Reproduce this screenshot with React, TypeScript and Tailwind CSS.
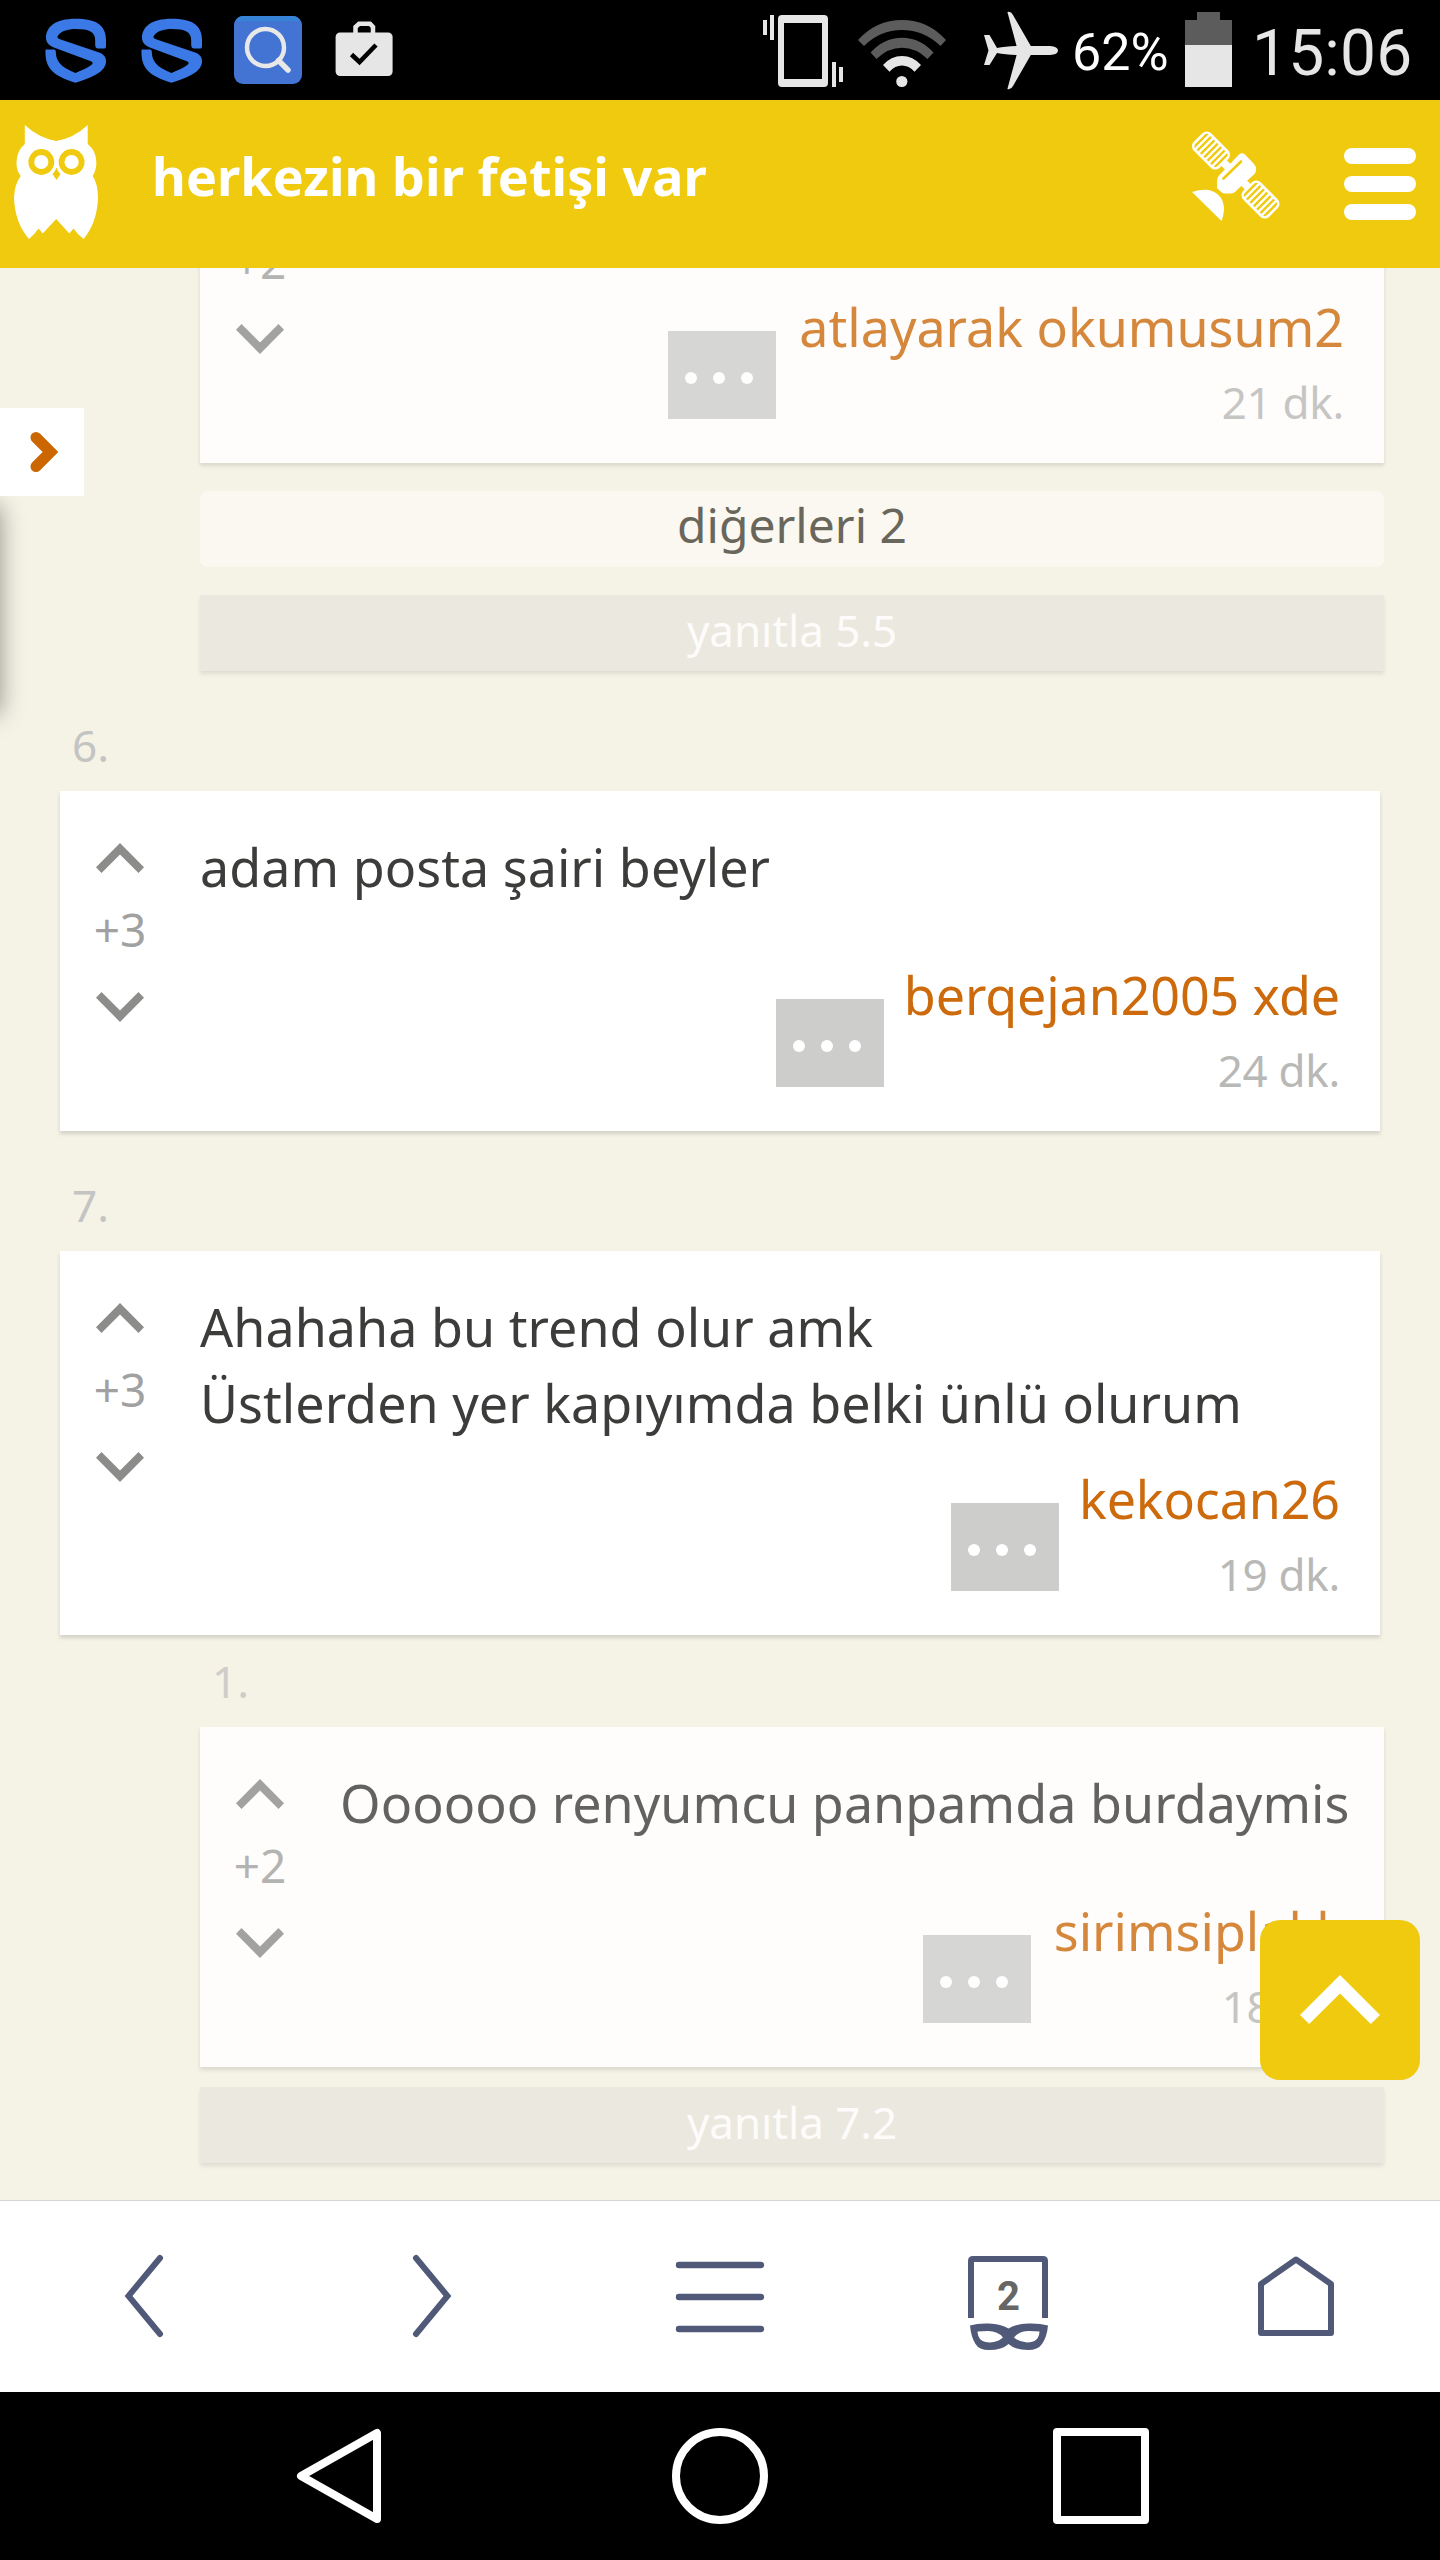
import React from 'react';

type Entry = {
  score: string;
  lines: string[];
  author: string;
  time: string;
};

const CLIPPED_REPLY: Entry = { score: '+2', lines: [''], author: 'atlayarak okumusum2', time: '21 dk.' };
const POST_6: Entry = { score: '+3', lines: ['adam posta şairi beyler'], author: 'berqejan2005 xde', time: '24 dk.' };
const POST_7: Entry = {
  score: '+3',
  lines: ['Ahahaha bu trend olur amk', 'Üstlerden yer kapıyımda belki ünlü olurum'],
  author: 'kekocan26',
  time: '19 dk.',
};
const REPLY_7_1: Entry = {
  score: '+2',
  lines: ['Oooooo renyumcu panpamda burdaymis'],
  author: 'sirimsiplakk',
  time: '18 dk.',
};

const ShieldS = ({ className = '' }: { className?: string }) => (
  <svg className={className} width="62" height="65" viewBox="45 18 63 65" preserveAspectRatio="none">
    <path
      fill="#3b7ae6"
      d="M107 46V40C107 25 97 18.700 76 18.700C55 18.700 46 27 46 38C46 43 50 45.500 54 47.500L91 61C94 62 94 63.500 92 65C88 68.500 82 70 76 73C70 70 56 66 56 52C56 50 55 49.500 53 49.500H45.500C45 66 50 75 76 82.700C98 76 107 70 107 61C107 56.500 104 54 100 52.500L61 39.500C58 38.500 57 37.500 58 36C61 31 68 29 76 29C90 29 96 32 96 40V45C96 47 97 48.500 99 48.500H105C106 48.500 107 48 107 46Z"
    />
  </svg>
);

const StatusBar = () => (
  <div className="flex h-[100px] shrink-0 bg-black">
    <ShieldS className="mt-[18px] ml-[45px]" />
    <ShieldS className="mt-[18px] ml-[34px]" />
    <svg className="mt-4 ml-[31px]" width="68" height="68" viewBox="234 16 68 68">
      <rect x="234" y="16" width="68" height="68" rx="9" fill="#4373d3" />
      <path d="M236 21Q238 16 243 16H293Q298 16 300 21Z" fill="#3683d8" />
      <ellipse cx="265.500" cy="47.500" rx="18.500" ry="18.500" fill="none" stroke="#e8e8e8" strokeWidth="4.500" />
      <path d="M278.500 60.500L288 70" stroke="#e8e8e8" strokeWidth="5.500" strokeLinecap="round" />
    </svg>
    <svg className="mt-[21px] ml-[33px]" width="58" height="56" viewBox="335 21 58 56">
      <path d="M355.500 34V27L359 23.800H370L373 27V34" fill="none" stroke="#e6e6e6" strokeWidth="4.500" />
      <rect x="335.600" y="32.500" width="57" height="43.500" rx="4.500" fill="#e6e6e6" />
      <path d="M351.500 54.500L359.500 62L376 45" fill="none" stroke="#000" strokeWidth="4.600" />
    </svg>

    {/* ringer, network, power */}
    <svg className="mt-3 ml-[369px]" width="82" height="78" viewBox="762 12 82 78">
      <g fill="#e6e6e6">
        <path fillRule="evenodd" d="M782 15H824Q828 15 828 19V83Q828 87 824 87H782Q778 87 778 83V19Q778 15 782 15ZM784 23V79H822V23Z" />
        <path d="M763 20H767V35H763ZM770 15H774V40H770ZM832 62H836V87H832ZM839 67H843V82H839Z" />
      </g>
    </svg>
    <svg className="mt-4 ml-[13px]" width="90" height="74" viewBox="857 16 90 74">
      <g fill="#5c5c5c">
        <path d="M858 40Q876 20 902 20Q928 20 946 40L940.500 46Q924 30 902 30Q880 30 864 46Z" />
        <path d="M870.600 52.500Q884 37.700 902 37.700Q920 37.700 933.500 52.500L927.500 59Q916 47.700 902 47.700Q888 47.700 876.500 59Z" />
      </g>
      <path fill="#e6e6e6" d="M883 65Q891 56 902 56Q913 56 921 65L914.500 71.800Q909 65.500 902 65.500Q895 65.500 889.500 71.800Z" />
      <circle cx="901.800" cy="81.500" r="5.600" fill="#e6e6e6" />
    </svg>
    <svg className="mt-[11px] ml-9" width="76" height="80" viewBox="983 11 76 80">
      <path
        fill="#e6e6e6"
        d="M1007.400 12Q1011 11 1013 15L1030.800 46H1050Q1058 46.500 1058 50.500Q1058 54.500 1050 55H1030.800L1013 86Q1011 90 1007.400 89L1016.600 55Q1005 54.500 997 53L989.500 65H984L988.500 50.500L984 35H989.500L997 48Q1005 46.500 1016.600 46Z"
      />
    </svg>
    <span className="ml-[13px] w-[98px] whitespace-nowrap font-[Roboto] text-[52px] leading-[105px] text-white">62%</span>
    <svg className="mt-3 ml-[15px] shrink-0" width="47" height="75" viewBox="1185 12 47 75">
      <path d="M1197 12H1220V20H1232V45H1185V20H1197Z" fill="#5c5c5c" />
      <path d="M1185 45H1232V87H1185Z" fill="#e6e6e6" />
    </svg>
    <span className="ml-5 whitespace-nowrap font-[Roboto] text-[64px] leading-[107px] tracking-[0.2px] text-[#e6e6e6]">15:06</span>
  </div>
);

const Owl = () => (
  <svg className="mt-6 ml-[13px] shrink-0" width="86" height="116" viewBox="13 124 86 116">
    <path
      fill="#fff"
      d="M24.800 125Q39 138 56.200 141Q74 138 87.700 125V144Q96.500 151 96.400 163Q96 171 92.700 176Q98 184 98 198Q97 223 83.600 239Q77 234 73.500 228.600L69.300 233.500L56.200 219L42.700 233.500L38.600 228.600Q35 234 29 239Q15 223 14 198Q14.500 184 20.700 176Q16.500 171 16.500 163Q16.500 151 24.800 144Z"
    />
    <circle cx="41.300" cy="162" r="10" fill="#fff" stroke="#f0ca0f" strokeWidth="5.800" />
    <circle cx="71.600" cy="162" r="10" fill="#fff" stroke="#f0ca0f" strokeWidth="5.800" />
    <path d="M56.500 167.500Q58 172 60.500 174L56.500 180L52.500 174Q55 172 56.500 167.500Z" fill="#f0ca0f" />
  </svg>
);

const SolarPanel = ({ transform }: { transform: string }) => (
  <g transform={transform} fill="none" stroke="#fff">
    <rect x="-17" y="-11" width="34" height="22" rx="5" strokeWidth="2.600" />
    <path d="M-12 -10V10M-7.200 -11V11M-2.400 -11V11M2.400 -11V11M7.200 -11V11M12 -10V10" strokeWidth="2.400" />
  </g>
);

const Satellite = () => (
  <svg className="mt-[30px] shrink-0" width="90" height="92" viewBox="1191 130 90 92">
    <SolarPanel transform="translate(1211 150.500) rotate(45)" />
    <SolarPanel transform="translate(1260.500 199.500) rotate(45)" />
    <path d="M1223 162L1249 188" stroke="#fff" strokeWidth="8" />
    <path
      fill="#fff"
      d="M1239 154.500Q1242 152 1245 154.500L1254 164Q1258 169 1254.500 174L1238 189L1235 192Q1233 193.500 1230 193.500H1225Q1222 193.500 1217 188V181Q1217 178 1219 175.500Z"
    />
    <path d="M1223.500 178.500L1241 161.500" stroke="#f0ca0f" strokeWidth="2.600" strokeLinecap="round" />
    <path d="M1192 192Q1201 189 1209 190Q1224 194 1224 210Q1223.500 216 1221.500 221Z" fill="#fff" />
  </svg>
);

const Header = () => (
  <header className="flex h-[168px] shrink-0 bg-[#f0ca0f]">
    <Owl />
    <h1 className="ml-[53px] flex-1 whitespace-nowrap text-[52px] leading-[152px] font-bold tracking-[0.08px] text-white">
      herkezin bir fetişi var
    </h1>
    <Satellite />
    <div className="mt-12 mr-6 ml-[63px] flex w-[72px] flex-col gap-3">
      <span className="h-4 rounded-lg bg-white" />
      <span className="h-4 rounded-lg bg-white" />
      <span className="h-4 rounded-lg bg-white" />
    </div>
  </header>
);

const Chevron = ({ down = false, className = '' }: { down?: boolean; className?: string }) => (
  <svg className={className} width="48" height="30" viewBox="0 0 48 30">
    <path d={down ? 'M0 5.800L5.500 0L24 18.500L42.500 0L48 5.800L24 30Z' : 'M0 24.200L5.500 30L24 11.500L42.500 30L48 24.200L24 0Z'} fill="#8c8c8b" />
  </svg>
);

const EntryCard = ({ entry, reply = false }: { entry: Entry; reply?: boolean }) => (
  <article
    className={
      reply
        ? 'ml-[200px] w-[1184px] bg-white/85 shadow-[0_3px_4px_rgba(0,0,0,0.11)]'
        : 'ml-[60px] w-[1320px] bg-white shadow-[0_3px_4px_rgba(0,0,0,0.14)]'
    }
  >
    <div className={reply ? 'flex min-h-[340px] opacity-80' : 'flex min-h-[340px]'}>
      <div className="flex w-[120px] shrink-0 flex-col items-center">
        <Chevron className="mt-[52px]" />
        <span className="text-[46px] leading-[112px] text-[#a1a1a1]">{entry.score}</span>
        <Chevron down className="mt-[7px]" />
      </div>
      <div className="flex min-w-0 flex-1 flex-col pt-[38px] pr-10 pb-[22px] pl-5">
        {entry.lines.map((line, i) => (
          <p key={i} className="min-h-[76px] text-[52px] leading-[76px] tracking-[0.04px] whitespace-nowrap text-[#3c3c3b]">
            {line}
          </p>
        ))}
        <div className={reply ? 'mt-auto flex items-end justify-end gap-[23px] pt-[22px]' : 'mt-auto flex items-end justify-end gap-5 pt-[22px]'}>
          <div className="mb-[22px] flex h-[88px] w-[108px] gap-4 bg-[#cdcdcc] pt-[41px] pl-[17px]">
            <span className="size-3 rounded-full bg-white" />
            <span className="size-3 rounded-full bg-white" />
            <span className="size-3 rounded-full bg-white" />
          </div>
          <div className="flex flex-col text-right whitespace-nowrap">
            <span className={reply ? 'text-[52px] leading-[72px] text-[#cc6a0c]' : 'text-[52px] leading-[72px] tracking-[-0.12px] text-[#cc6a0c]'}>
              {entry.author}
            </span>
            <span className="text-[44px] leading-[78px] tracking-[-0.3px] text-[#b8b8b7]">{entry.time}</span>
          </div>
        </div>
      </div>
    </div>
  </article>
);

const ReplyButton = ({ label, className }: { label: string; className: string }) => (
  <div
    className={`ml-[200px] h-[76px] w-[1184px] bg-[#ebe8e0] text-center text-[44px] leading-[71px] tracking-[-0.1px] text-[#fdfcfa] shadow-[0_3px_4px_rgba(0,0,0,0.09)] ${className}`}
  >
    {label}
  </div>
);

const Feed = () => (
  <main className="relative h-[1932px] shrink-0 overflow-hidden bg-[#f5f2e6]">
    <div className="-mt-[145px] flex flex-col">
      <EntryCard entry={CLIPPED_REPLY} reply />
      <div className="mt-7 ml-[200px] h-[76px] w-[1184px] rounded-lg bg-[#fbf8f1] text-center text-[48px] leading-[67px] text-[#69665b]">
        diğerleri 2
      </div>
      <ReplyButton label="yanıtla 5.5" className="mt-7" />

      <span className="mt-[29px] ml-[72px] text-[44px] leading-[91px] text-[#c4c4c3]">6.</span>
      <EntryCard entry={POST_6} />

      <span className="mt-[29px] ml-[72px] text-[44px] leading-[91px] text-[#c4c4c3]">7.</span>
      <EntryCard entry={POST_7} />

      <span className="mt-px ml-[212px] text-[44px] leading-[91px] text-[#cecdc9]">1.</span>
      <EntryCard entry={REPLY_7_1} reply />
      <ReplyButton label="yanıtla 7.2" className="mt-5" />
    </div>

    {/* collapsed side drawer and its handle */}
    <div className="absolute top-[238px] -left-10 h-[208px] w-10 shadow-[0_0_24px_rgba(0,0,0,0.4)]" />
    <div className="absolute top-[140px] left-0 h-[88px] w-[84px] bg-white">
      <svg width="84" height="88" viewBox="0 408 84 88">
        <path d="M36 437.500L50.500 452L36 466.500" fill="none" stroke="#cc6600" strokeWidth="11" strokeLinecap="round" />
      </svg>
    </div>

    {/* back to top */}
    <div className="absolute top-[1652px] right-5 flex h-40 w-40 justify-center rounded-[20px] bg-[#f0ca0f] pt-[55px]">
      <svg width="80" height="49" viewBox="0 0 80 49">
        <path d="M0 40L9.200 49L40 18.500L70.800 49L80 40L40 0Z" fill="#fff" />
      </svg>
    </div>
  </main>
);

const BrowserBar = () => (
  <div className="grid h-[192px] shrink-0 grid-cols-5 border-t border-[#d4d4d6] bg-white pt-[49px]">
    <svg className="mx-auto" width="96" height="104" viewBox="96 2250 96 104" fill="none" stroke="#505a78" strokeWidth="6" strokeLinecap="round">
      <path d="M160 2258L128.500 2296L160 2334" />
    </svg>
    <svg className="mx-auto" width="96" height="104" viewBox="384 2250 96 104" fill="none" stroke="#505a78" strokeWidth="6" strokeLinecap="round">
      <path d="M416 2258L447.500 2296L416 2334" />
    </svg>
    <svg className="mx-auto" width="96" height="104" viewBox="672 2250 96 104" fill="none" stroke="#505a78" strokeWidth="6.400" strokeLinecap="round">
      <path d="M679 2265H761M679 2297H761M679 2329H761" />
    </svg>
    <div className="relative mx-auto">
      <svg width="96" height="104" viewBox="960 2250 96 104">
        <path d="M971 2318V2261Q971 2259 973 2259H1043Q1045 2259 1045 2261V2318" fill="none" stroke="#505a78" strokeWidth="6" />
        <path
          fillRule="evenodd"
          fill="#505a78"
          d="M970 2325.500Q978 2323 989 2323.500Q1001 2324 1008.500 2328.500Q1016 2324 1028 2323.500Q1039 2323 1048 2325.500Q1047 2337 1042 2344Q1038 2350 1028 2350Q1015 2350 1008.500 2344Q1002 2350 989 2350Q979 2350 975.500 2344Q971 2337 970 2325.500ZM977.500 2331.500Q978 2342.500 990 2342.500Q998 2342 1003 2337.500Q998 2331 988 2331Q982 2331 977.500 2331.500ZM1039.500 2331.500Q1039 2342.500 1027 2342.500Q1019 2342 1014 2337.500Q1019 2331 1029 2331Q1035 2331 1039.500 2331.500Z"
        />
      </svg>
      <span className="absolute inset-x-0 top-[23px] pl-px text-center font-[Roboto] text-[40px] leading-[48px] font-bold text-[#666]">2</span>
    </div>
    <svg className="mx-auto" width="96" height="104" viewBox="1248 2250 96 104" fill="none" stroke="#505a78" strokeWidth="6" strokeLinejoin="round">
      <path d="M1261 2284L1296 2259.500L1331 2284V2333H1261Z" />
    </svg>
  </div>
);

const NavBar = () => (
  <div className="flex h-[168px] shrink-0 bg-black pt-9">
    <svg className="ml-[296px]" width="86" height="96" viewBox="0 0 86 96" fill="none" stroke="#fff" strokeWidth="8" strokeLinejoin="round">
      <path d="M81 5V91L5 48Z" />
    </svg>
    <svg className="ml-[290px]" width="96" height="96" viewBox="0 0 96 96">
      <circle cx="48" cy="48" r="44" fill="none" stroke="#fff" strokeWidth="8" />
    </svg>
    <div className="ml-[285px] h-24 w-24 rounded border-8 border-white" />
  </div>
);

export default function App() {
  return (
    <div className="flex h-[2560px] w-[1440px] flex-col overflow-hidden font-['Noto_Sans',sans-serif]">
      <StatusBar />
      <Header />
      <Feed />
      <BrowserBar />
      <NavBar />
    </div>
  );
}
